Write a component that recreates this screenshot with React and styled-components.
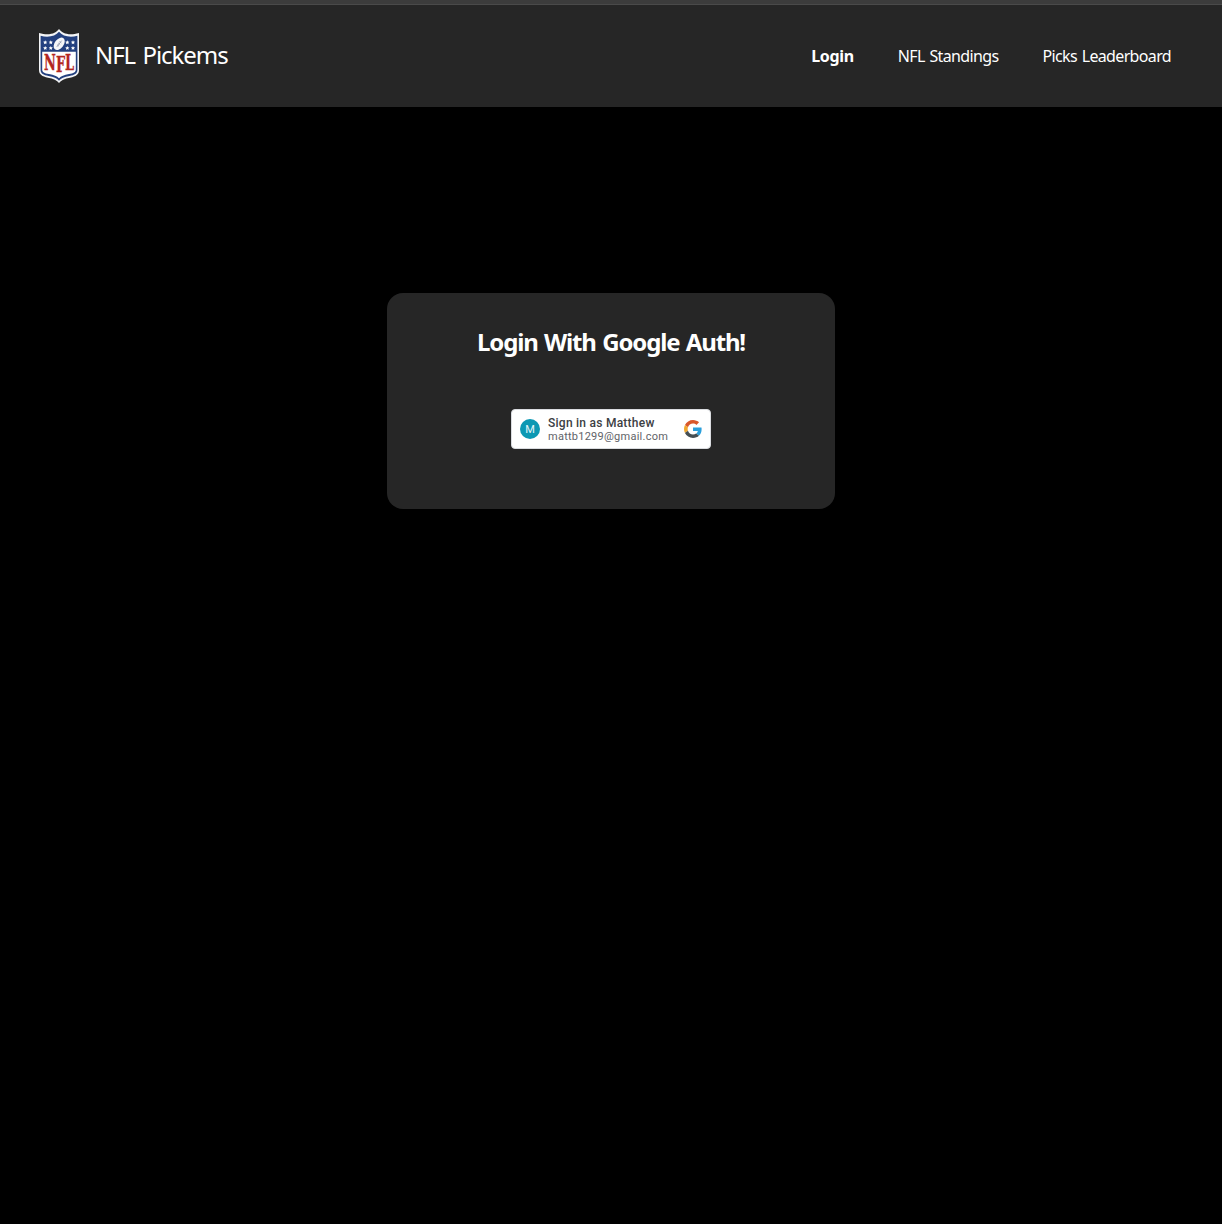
import React from 'react';
import styled, { createGlobalStyle } from 'styled-components';

const GlobalStyle = createGlobalStyle`
  * { box-sizing: border-box; }
  body {
    margin: 0;
    background: #000;
    color: #fff;
    font-family: 'Segoe UI', 'Noto Sans', 'Open Sans', sans-serif;
  }
`;

const Page = styled.div`
  min-height: 100vh;
  display: flex;
  flex-direction: column;
  align-items: center;
`;

const TopStrip = styled.div`
  width: 100%;
  height: 5px;
  background: #3c3c3c;
  border-bottom: 1px solid #4a4a4a;
`;

const Header = styled.header`
  width: 100%;
  height: 102px;
  padding: 0 51px 0 39px;
  background: #262626;
  display: flex;
  align-items: center;
  justify-content: space-between;
`;

const Brand = styled.div`
  display: flex;
  align-items: center;
  gap: 16px;
`;

const BrandName = styled.span`
  font-size: 24px;
  line-height: 32px;
  letter-spacing: -1.05px;
  word-spacing: 2.2px;
  white-space: nowrap;
  padding-bottom: 2px;
`;

const Nav = styled.nav`
  display: flex;
  gap: 44px;
  padding-bottom: 1px;
`;

const NavLink = styled.a`
  font-size: 16px;
  line-height: 22px;
  letter-spacing: ${(p) => p.$tracking}px;
  word-spacing: 1.2px;
  font-weight: ${(p) => (p.$active ? 700 : 400)};
  white-space: nowrap;
`;

const Card = styled.main`
  width: 448px;
  height: 216px;
  margin-top: 186px;
  padding-top: 33px;
  border-radius: 16px;
  background: #262626;
  display: flex;
  flex-direction: column;
  align-items: center;
  gap: 51px;
`;

const Title = styled.h1`
  margin: 0;
  font-size: 24px;
  line-height: 32px;
  font-weight: 700;
  letter-spacing: -1.15px;
  word-spacing: 1.3px;
  white-space: nowrap;
`;

const GoogleButton = styled.button`
  width: 200px;
  height: 40px;
  padding: 0 8px;
  border: 1px solid #dadce0;
  border-radius: 4px;
  background: #fff;
  display: flex;
  align-items: center;
  font-family: Roboto, sans-serif;
  text-align: left;
`;

const Avatar = styled.span`
  width: 20px;
  height: 20px;
  border-radius: 50%;
  background: #0b98b3;
  color: #e2f6fa;
  font-size: 11px;
  line-height: 21px;
  text-align: center;
`;

const Account = styled.span`
  flex: 1;
  margin-left: 8px;
  display: flex;
  flex-direction: column;
`;

const AccountName = styled.span`
  font-size: 12px;
  line-height: 14px;
  font-weight: 500;
  letter-spacing: 0.25px;
  color: #3c4043;
  white-space: nowrap;
`;

const AccountEmail = styled.span`
  font-size: 11px;
  line-height: 13px;
  letter-spacing: 0.25px;
  color: #5f6368;
  white-space: nowrap;
`;

const STARS = [
  [6.2, 13.3], [11.8, 13.3], [6.2, 19], [11.8, 19],
  [28.3, 13.3], [34, 13.3], [28.3, 19], [34, 19],
];

const SHIELD =
  'M20 0C17 4.200 10.500 7 0 4V41C0 45.500 3 47.500 9 48.700C14.500 49.700 18 51.200 20 54C22 51.200 25.500 49.700 31 48.700C37 47.500 40 45.500 40 41V4C29.500 7 23 4.200 20 0Z';

function ShieldLogo() {
  return (
    <svg width="40" height="54" viewBox="0 0 40 54" overflow="visible" aria-label="NFL">
      <path d={SHIELD} fill="#f3f4f6" />
      <path
        d="M20 2.700C16.500 7 9.500 9 1.600 6.700V41C1.600 44.600 4.500 46 9.500 47C14.700 48 18 49.300 20 51.700C22 49.300 25.300 48 30.500 47C35.500 46 38.400 44.600 38.400 41V6.700C30.500 9 23.500 7 20 2.700Z"
        fill="#23407f"
      />
      <path
        d="M3.200 22.800H36.800V40.500C36.800 43.300 34.500 44.200 30 45.100C25 46 22 47.300 20 49.300C18 47.300 15 46 10 45.100C5.500 44.200 3.200 43.300 3.200 40.500Z"
        fill="#fff"
      />
      {STARS.map(([x, y]) => (
        <path
          key={`${x}-${y}`}
          transform={`translate(${x} ${y})`}
          d="M0-2.100L.6-.7 2.100-.6 1 .4 1.300 1.900 0 1.100-1.300 1.900-1 .4-2.100-.6-.6-.7Z"
          fill="#fff"
        />
      ))}
      <g transform="translate(20.200 14.800) rotate(-52)">
        <ellipse rx="7" ry="4.500" fill="#f5f6f8" />
        <path d="M-4 0H4M-2-1.200V1.200M0-1.200V1.200M2-1.200V1.200" stroke="#8b93a8" strokeWidth=".7" />
      </g>
      <text
        transform="scale(.575 1)"
        x="8.800 29.400 45.400"
        y="41.300 43.500 41.500"
        fontFamily="'DejaVu Serif', serif"
        fontSize="22.500"
        fontWeight="700"
        fill="#b3261f"
        stroke="#b3261f"
        strokeWidth=".4"
      >
        NFL
      </text>
    </svg>
  );
}

function GoogleMark() {
  return (
    <svg width="18" height="18" viewBox="0 0 48 48" aria-label="Google">
      <path fill="#d9582b" d="M24 9.500c3.540 0 6.710 1.220 9.210 3.600l6.850-6.850C35.900 2.380 30.470 0 24 0 14.620 0 6.510 5.380 2.560 13.220l7.980 6.190C12.430 13.720 17.740 9.500 24 9.500z" />
      <path fill="#2b9fdb" d="M46.980 24.550c0-1.570-.15-3.090-.38-4.550H24v9.020h12.940c-.58 2.960-2.260 5.480-4.780 7.180l7.730 6c4.510-4.180 7.090-10.360 7.090-17.650z" />
      <path fill="#efa72e" d="M10.530 28.590c-.48-1.450-.76-2.990-.76-4.590s.27-3.140.76-4.590l-7.980-6.190C.92 16.460 0 20.120 0 24c0 3.880.92 7.540 2.560 10.780l7.970-6.190z" />
      <path fill="#454e53" d="M24 48c6.480 0 11.930-2.130 15.890-5.810l-7.730-6c-2.150 1.450-4.920 2.300-8.160 2.300-6.260 0-11.570-4.220-13.470-9.910l-7.980 6.190C6.510 42.620 14.620 48 24 48z" />
    </svg>
  );
}

export default function App() {
  return (
    <Page>
      <GlobalStyle />
      <TopStrip />
      <Header>
        <Brand>
          <ShieldLogo />
          <BrandName>NFL Pickems</BrandName>
        </Brand>
        <Nav>
          <NavLink $active $tracking={-0.35}>Login</NavLink>
          <NavLink $tracking={-0.63}>NFL Standings</NavLink>
          <NavLink $tracking={-0.65}>Picks Leaderboard</NavLink>
        </Nav>
      </Header>
      <Card>
        <Title>Login With Google Auth!</Title>
        <GoogleButton>
          <Avatar>M</Avatar>
          <Account>
            <AccountName>Sign in as Matthew</AccountName>
            <AccountEmail>mattb1299@gmail.com</AccountEmail>
          </Account>
          <GoogleMark />
        </GoogleButton>
      </Card>
    </Page>
  );
}
